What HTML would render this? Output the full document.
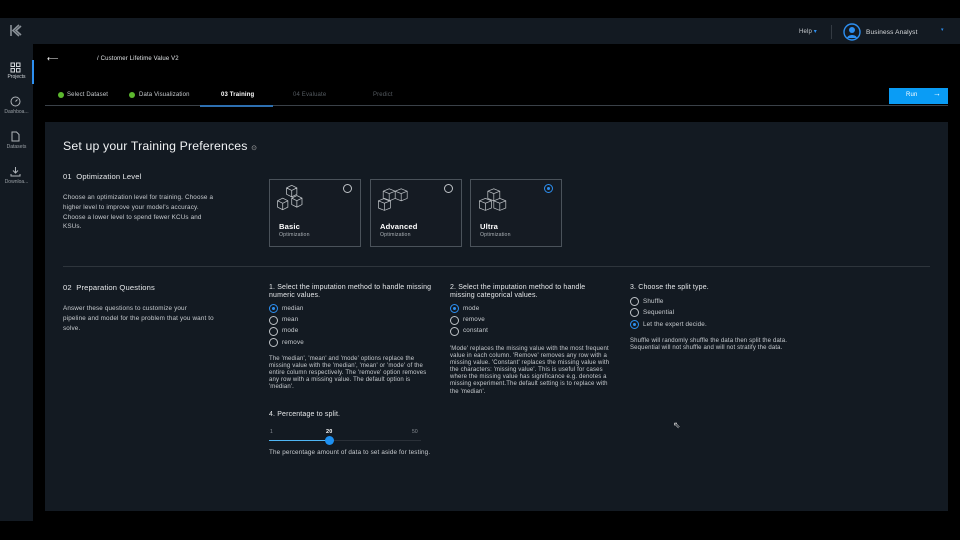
<!DOCTYPE html>
<html><head><meta charset="utf-8"><style>
*{margin:0;padding:0;box-sizing:border-box}
body{width:960px;height:540px;background:#000;font-family:"Liberation Sans",sans-serif;color:#e6e8ea;position:relative;overflow:hidden;letter-spacing:.15px}
.abs{position:absolute}
.top{left:0;top:18px;width:960px;height:26px;background:#131a22}
.side{left:0;top:44px;width:33px;height:477px;background:#131a22}
.panel{left:45px;top:122px;width:903px;height:389px;background:#131a22}
.t{position:absolute;white-space:nowrap}
.s{font-size:6.3px;color:#c8ccd0;line-height:8.2px}
.r{position:absolute;width:9px;height:9px;border:1.3px solid #bfc3c7;border-radius:50%}
.r.on{border-color:#2d8ff0}
.r.on:after{content:"";position:absolute;left:1.5px;top:1.5px;width:3.5px;height:3.5px;border-radius:50%;background:#2d8ff0}
.card{position:absolute;top:179px;width:92px;height:68px;border:1px solid #4a525a;background:#151b23}
.sb{position:absolute;left:0;width:33px;text-align:center;font-size:5px;color:#9aa0a6;letter-spacing:0}
.d{font-size:6px;line-height:7.1px;color:#c8ccd0;white-space:normal}
.q{font-size:7px;line-height:8px;color:#e6e8ea}
</style></head><body>
<div class="abs top"></div>
<div class="abs side"></div>
<svg class="abs" style="left:10px;top:24px" width="12" height="13" viewBox="0 0 12 13"><path d="M1 1v11M9 1L3 6.5 9 12M11 2L6 6.5 11 11" stroke="#8a9198" stroke-width="1.6" fill="none"/></svg>
<div class="t" style="left:799px;top:28px;font-size:6px;color:#c8ccd0">Help <span style="color:#2d8ff0">▾</span></div>
<div class="abs" style="left:831px;top:25px;width:1px;height:14px;background:#333a42"></div>
<svg class="abs" style="left:843px;top:23px" width="18" height="18" viewBox="0 0 18 18"><circle cx="9" cy="9" r="8" stroke="#2d8ff0" stroke-width="1.4" fill="none"/><circle cx="9" cy="7" r="3" fill="#2d8ff0"/><path d="M4 15c1-4 9-4 10 0" fill="#2d8ff0"/></svg>
<div class="t" style="left:866px;top:29px;font-size:6.5px;color:#d8dbde">Business Analyst</div>
<div class="t" style="left:941px;top:27px;font-size:5px;color:#2d8ff0">▾</div>
<div class="abs" style="left:32px;top:60px;width:1.5px;height:24px;background:#2d8ff0"></div>
<svg class="abs" style="left:10px;top:62px" width="11" height="11" viewBox="0 0 11 11" fill="none" stroke="#d0d4d8" stroke-width="1"><rect x="1" y="1" width="3.5" height="3.5"/><rect x="6.5" y="1" width="3.5" height="3.5"/><rect x="1" y="6.5" width="3.5" height="3.5"/><rect x="6.5" y="6.5" width="3.5" height="3.5"/></svg>
<div class="sb" style="top:74px;color:#d0d4d8">Projects</div>
<svg class="abs" style="left:10px;top:96px" width="11" height="11" viewBox="0 0 11 11" fill="none" stroke="#b0b5ba" stroke-width="1"><circle cx="5.5" cy="5.5" r="4.5"/><path d="M5.5 5.5l2-2"/></svg>
<div class="sb" style="top:109px">Dashboa...</div>
<svg class="abs" style="left:11px;top:131px" width="9" height="11" viewBox="0 0 9 11" fill="none" stroke="#b0b5ba" stroke-width="1"><path d="M1 1h4.5L8 3.5V10H1z"/></svg>
<div class="sb" style="top:144px">Datasets</div>
<svg class="abs" style="left:10px;top:166px" width="11" height="11" viewBox="0 0 11 11" fill="none" stroke="#b0b5ba" stroke-width="1"><path d="M5.5 1v6M3 4.5l2.5 2.5L8 4.5M1 8v2h9V8"/></svg>
<div class="sb" style="top:179px">Downloa...</div>
<div class="t" style="left:47px;top:54px;font-size:8px;color:#fff">⟵</div>
<div class="t" style="left:97px;top:56px;font-size:6px;color:#e0e3e6">/ Customer Lifetime Value V2</div>
<div class="abs" style="left:58px;top:92px;width:6px;height:6px;border-radius:50%;background:#5cb82e"></div>
<div class="t" style="left:67px;top:92px;font-size:6px;color:#c8ccd0">Select Dataset</div>
<div class="abs" style="left:129px;top:92px;width:6px;height:6px;border-radius:50%;background:#5cb82e"></div>
<div class="t" style="left:139px;top:92px;font-size:6px;color:#c8ccd0">Data Visualization</div>
<div class="t" style="left:221px;top:92px;font-size:6px;color:#fff;font-weight:bold">03 Training</div>
<div class="t" style="left:293px;top:92px;font-size:6px;color:#555b61">04 Evaluate</div>
<div class="t" style="left:373px;top:92px;font-size:6px;color:#555b61">Predict</div>
<div class="abs" style="left:45px;top:105px;width:903px;height:1px;background:#3a4148"></div>
<div class="abs" style="left:200px;top:105px;width:73px;height:1.5px;background:#2d6fb0"></div>
<div class="abs" style="left:889px;top:88px;width:59px;height:16px;background:#0a9cf5"></div>
<div class="t" style="left:906px;top:92px;font-size:6px;color:#fff">Run</div>
<div class="t" style="left:933px;top:89px;font-size:8px;color:#fff">→</div>
<div class="abs panel"></div>
<div class="t" style="left:63px;top:139px;font-size:12.3px;color:#f0f2f4">Set up your Training Preferences <span style="font-size:7px;color:#aaa">⊙</span></div>
<div class="t" style="left:63px;top:172px;font-size:7.6px;color:#e6e8ea">01&nbsp; Optimization Level</div>
<div class="t d" style="left:63px;top:193px;width:158px;font-size:6.3px;line-height:9.8px">Choose an optimization level for training. Choose a higher level to improve your model's accuracy. Choose a lower level to spend fewer KCUs and KSUs.</div>
<div class="card" style="left:269px"></div><div class="card" style="left:370px"></div><div class="card" style="left:470px"></div>
<svg class="abs" style="left:275px;top:184px" width="36" height="36" viewBox="0 0 28 28" fill="none" stroke="#bfc3c7" stroke-width=".6"><path d="M9 3l4-2 4 2v5l-4 2-4-2zM9 3l4 2 4-2M13 5v5M2 13l4-2 4 2v5l-4 2-4-2zM2 13l4 2 4-2M6 15v5M13 11l4-2 4 2v5l-4 2-4-2zM13 11l4 2 4-2M17 13v5"/></svg>
<svg class="abs" style="left:376px;top:185px" width="36" height="34" viewBox="0 0 30 28" fill="none" stroke="#bfc3c7" stroke-width=".6"><path d="M6 5l5-2 5 2v6l-5 2-5-2zM6 5l5 2 5-2M11 7v6M16 5l5-2 5 2v6l-5 2-5-2zM16 5l5 2 5-2M21 7v6M2 13l5-2 5 2v6l-5 2-5-2zM2 13l5 2 5-2M7 15v6"/></svg>
<svg class="abs" style="left:477px;top:185px" width="36" height="34" viewBox="0 0 30 28" fill="none" stroke="#bfc3c7" stroke-width=".6"><path d="M9 5l5-2 5 2v6l-5 2-5-2zM9 5l5 2 5-2M14 7v6M2 13l5-2 5 2v6l-5 2-5-2zM2 13l5 2 5-2M7 15v6M14 13l5-2 5 2v6l-5 2-5-2zM14 13l5 2 5-2M19 15v6"/></svg>
<div class="r" style="left:343px;top:184px"></div>
<div class="r" style="left:444px;top:184px"></div>
<div class="r on" style="left:544px;top:184px"></div>
<div class="t" style="left:279px;top:222px;font-size:7.6px;font-weight:bold;color:#fff">Basic</div>
<div class="t" style="left:380px;top:222px;font-size:7.6px;font-weight:bold;color:#fff">Advanced</div>
<div class="t" style="left:480px;top:222px;font-size:7.6px;font-weight:bold;color:#fff">Ultra</div>
<div class="t" style="left:279px;top:232px;font-size:5.2px;color:#aab0b5">Optimization</div>
<div class="t" style="left:380px;top:232px;font-size:5.2px;color:#aab0b5">Optimization</div>
<div class="t" style="left:480px;top:232px;font-size:5.2px;color:#aab0b5">Optimization</div>
<div class="abs" style="left:63px;top:266px;width:867px;height:1px;background:#2e353c"></div>
<div class="t" style="left:63px;top:283px;font-size:7.6px;color:#e6e8ea">02&nbsp; Preparation Questions</div>
<div class="t d" style="left:63px;top:304px;width:165px;font-size:6.3px;line-height:9.8px">Answer these questions to customize your<br>pipeline and model for the problem that you want to solve.</div>
<div class="t q" style="left:269px;top:284px">1. Select the imputation method to handle missing<br>numeric values.</div>
<div class="r on" style="left:269px;top:304px"></div><div class="t s" style="left:282px;top:305px">median</div>
<div class="r" style="left:269px;top:316px"></div><div class="t s" style="left:282px;top:316px">mean</div>
<div class="r" style="left:269px;top:327px"></div><div class="t s" style="left:282px;top:327px">mode</div>
<div class="r" style="left:269px;top:338px"></div><div class="t s" style="left:282px;top:339px">remove</div>
<div class="t d" style="left:269px;top:356px;width:165px">The 'median', 'mean' and 'mode' options replace the missing value with the 'median', 'mean' or 'mode' of the entire column respectively. The 'remove' option removes any row with a missing value. The default option is 'median'.</div>
<div class="t q" style="left:450px;top:284px">2. Select the imputation method to handle<br>missing categorical values.</div>
<div class="r on" style="left:450px;top:304px"></div><div class="t s" style="left:463px;top:305px">mode</div>
<div class="r" style="left:450px;top:316px"></div><div class="t s" style="left:463px;top:316px">remove</div>
<div class="r" style="left:450px;top:327px"></div><div class="t s" style="left:463px;top:327px">constant</div>
<div class="t d" style="left:450px;top:346px;width:162px">'Mode' replaces the missing value with the most frequent value in each column. 'Remove' removes any row with a missing value. 'Constant' replaces the missing value with the characters: 'missing value'. This is useful for cases where the missing value has significance e.g. denotes a missing experiment.The default setting is to replace with the 'median'.</div>
<div class="t q" style="left:630px;top:284px">3. Choose the split type.</div>
<div class="r" style="left:630px;top:297px"></div><div class="t s" style="left:643px;top:298px">Shuffle</div>
<div class="r" style="left:630px;top:308px"></div><div class="t s" style="left:643px;top:309px">Sequential</div>
<div class="r on" style="left:630px;top:320px"></div><div class="t s" style="left:643px;top:321px">Let the expert decide.</div>
<div class="t d" style="left:630px;top:338px;white-space:nowrap">Shuffle will randomly shuffle the data then split the data.<br>Sequential will not shuffle and will not stratify the data.</div>
<div class="t q" style="left:269px;top:411px">4. Percentage to split.</div>
<div class="t" style="left:270px;top:429px;font-size:5px;color:#8a9096">1</div>
<div class="t" style="left:326px;top:429px;font-size:5.5px;color:#fff;font-weight:bold">20</div>
<div class="t" style="left:412px;top:429px;font-size:5px;color:#8a9096">50</div>
<div class="abs" style="left:269px;top:440px;width:152px;height:1px;background:#2a3038"></div>
<div class="abs" style="left:269px;top:440px;width:60px;height:1.2px;background:#4fb6f5"></div>
<div class="abs" style="left:325px;top:436px;width:9px;height:9px;border-radius:50%;background:#1e90f0"></div>
<div class="t s" style="left:269px;top:449px">The percentage amount of data to set aside for testing.</div>
<div class="t" style="left:673px;top:420px;font-size:9px;color:#ddd">⇖</div>
</body></html>
